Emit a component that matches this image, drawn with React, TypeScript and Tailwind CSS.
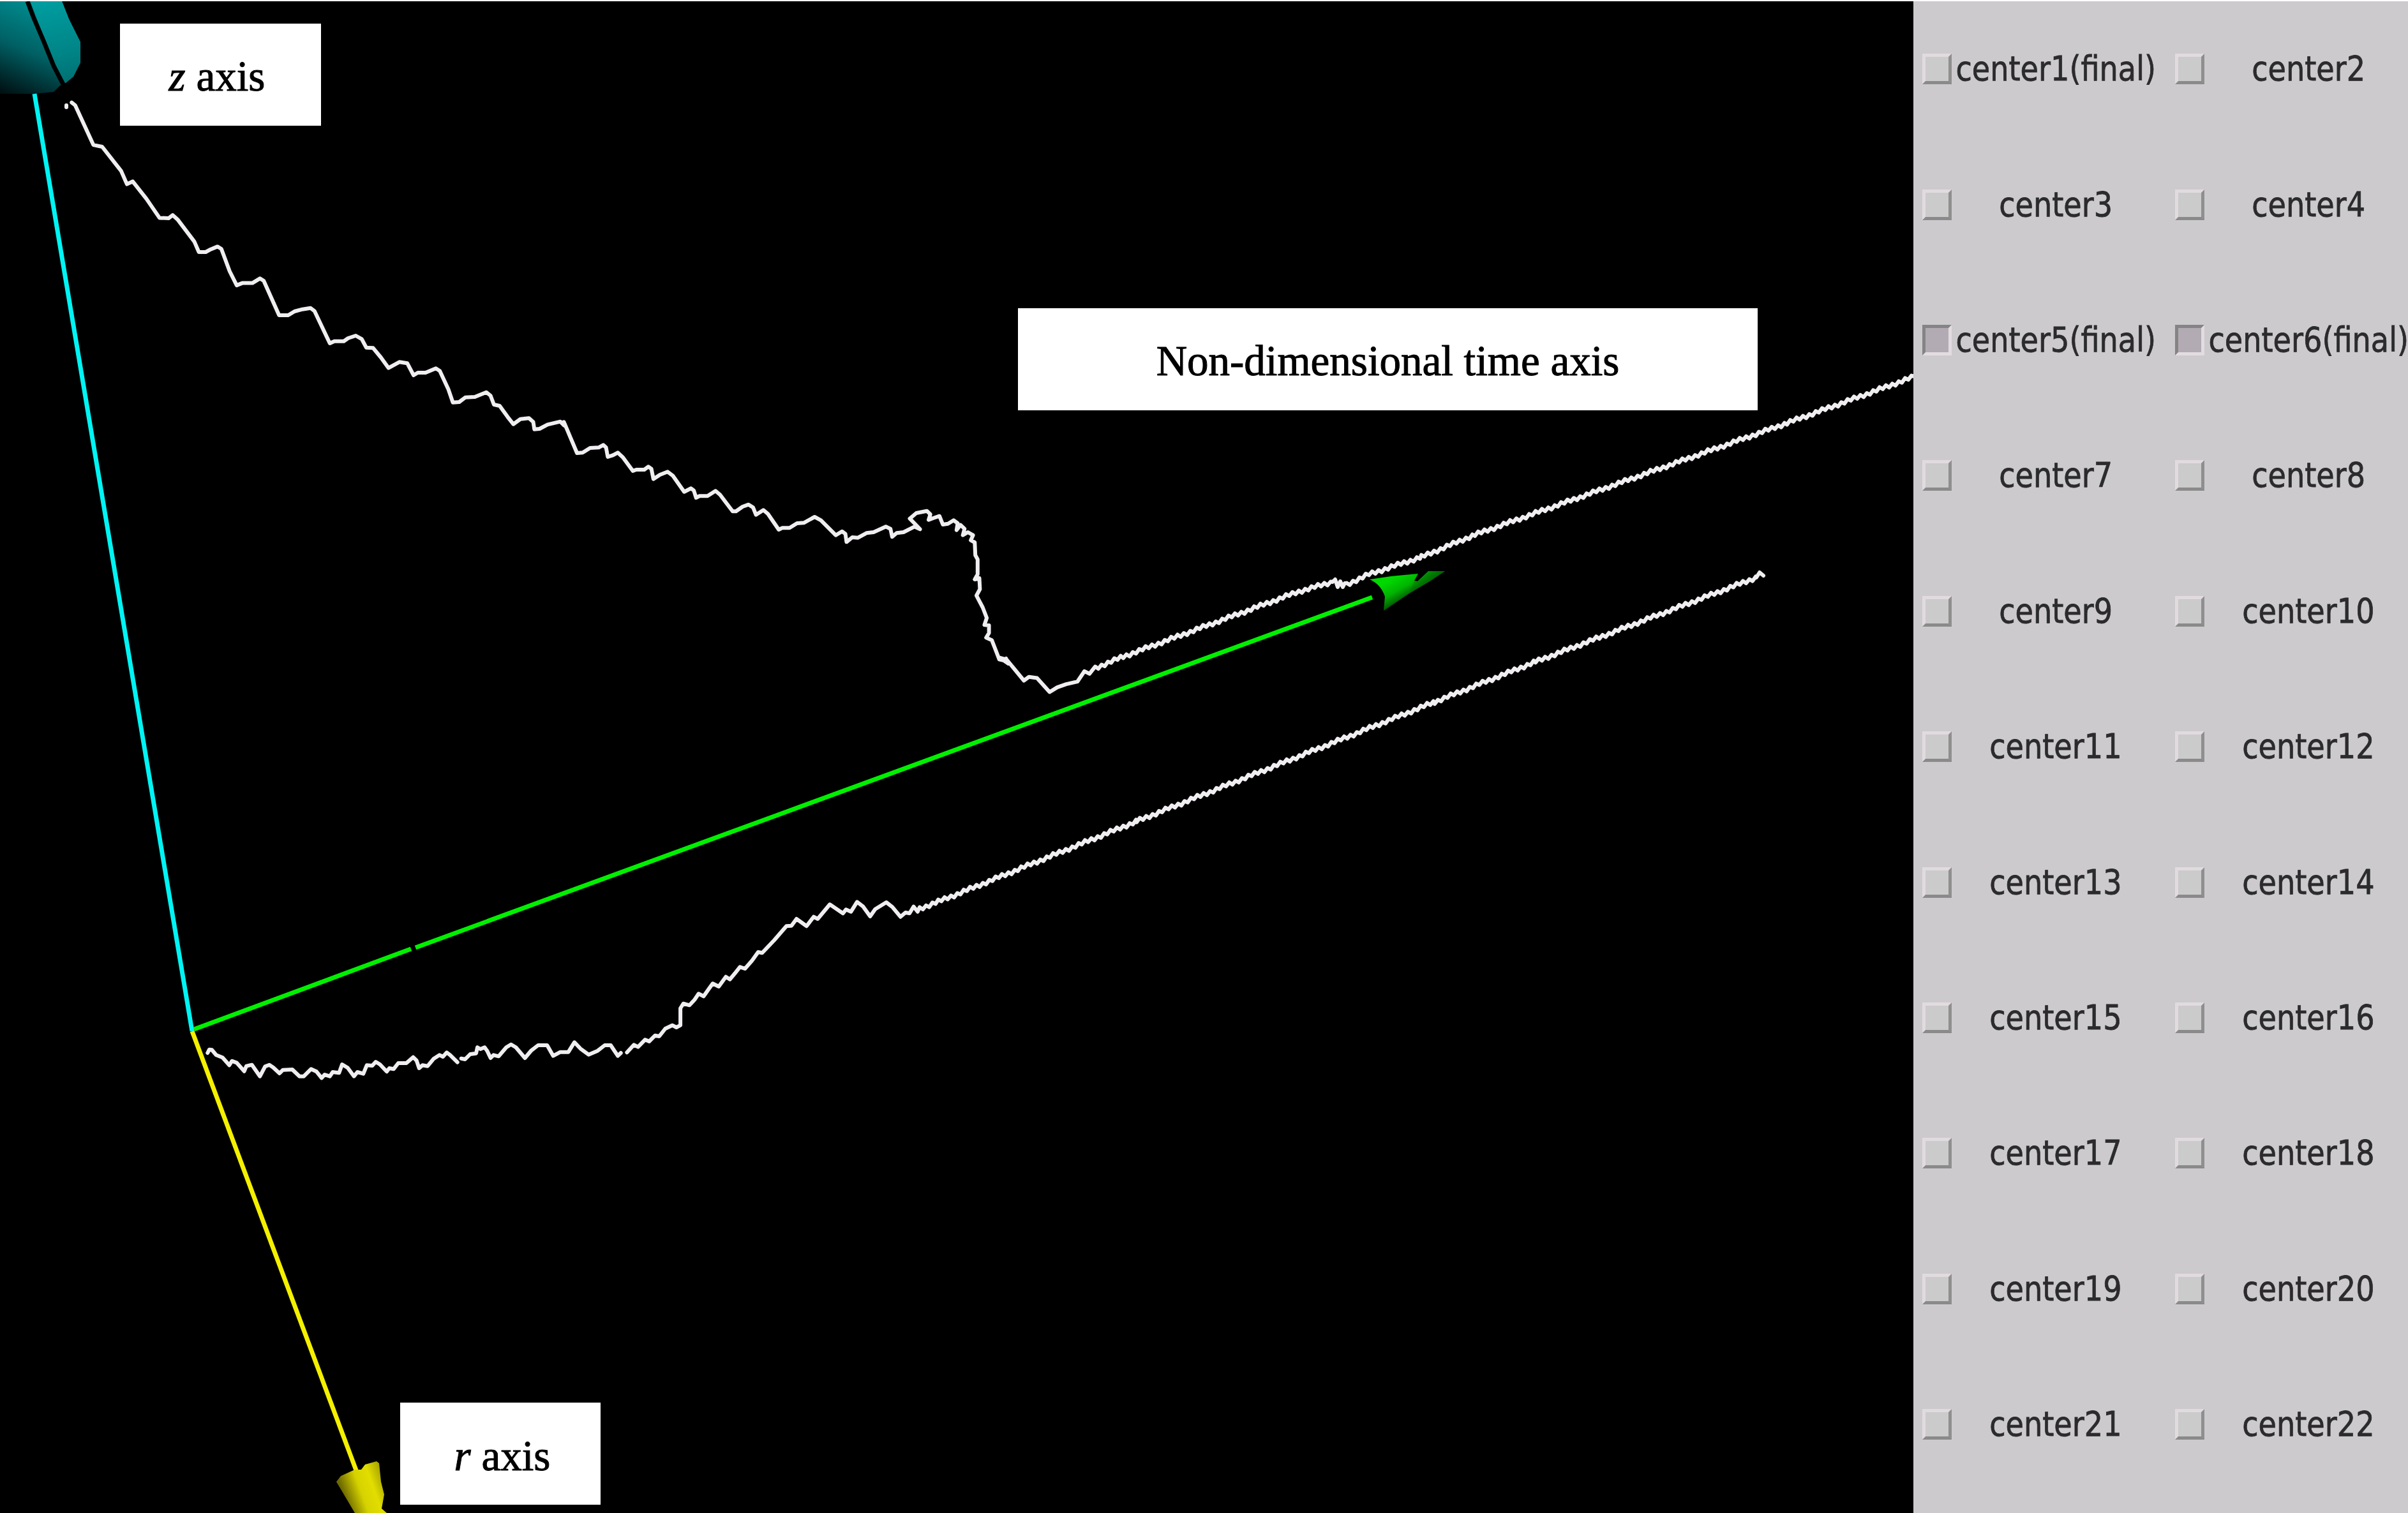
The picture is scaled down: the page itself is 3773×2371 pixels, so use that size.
import React from "react";

type Pt = [number, number];

// Digitised stretch of a curve: sampled points plus the origin and scale of their block.
function block(ox: number, oy: number, sx: number, sy: number, pts: Pt[]): Pt[] {
  return pts.map(([x, y]) => [ox + x / sx, oy + y / sy]);
}

// Fine ripple along a polyline, as left by the discrete time steps.
function ripple(nodes: Pt[], step = 5, amp = 2.4): Pt[] {
  const out: Pt[] = [];
  let n = 0;
  for (let i = 0; i < nodes.length - 1; i++) {
    const [x0, y0] = nodes[i];
    const [x1, y1] = nodes[i + 1];
    for (let x = x0; x < x1; x += step) {
      const y = y0 + ((x - x0) / (x1 - x0)) * (y1 - y0);
      out.push([x, y + (n % 2 ? amp : -amp) + Math.sin(n * 0.7)]);
      n++;
    }
  }
  out.push(nodes[nodes.length - 1]);
  return out;
}

const str = (pts: Pt[]) => pts.map(([x, y]) => `${x.toFixed(1)},${y.toFixed(1)}`).join(" ");

const upper: Pt[] = [
  ...block(0, 0, 2.529, 2.8, [
    [284, 450], [298, 462], [370, 636], [405, 644], [480, 750], [503, 808], [526, 796], [580, 872],
    [632, 956], [668, 958], [684, 944], [705, 965], [770, 1060], [788, 1106], [815, 1106], [835, 1094],
    [862, 1082], [877, 1092], [910, 1190], [938, 1252], [960, 1242], [1000, 1242], [1030, 1222],
    [1045, 1232],
  ]),
  ...block(340, 420, 2.24, 3, [
    [218, 222], [250, 222], [272, 204], [300, 194], [328, 188], [342, 202], [396, 354], [412, 344],
    [445, 344], [460, 330], [487, 318], [508, 334], [524, 374], [548, 376], [575, 420], [602, 470],
    [640, 442], [668, 448], [690, 504], [705, 492], [732, 492], [768, 472], [782, 484], [812, 570],
    [828, 632], [850, 630], [872, 608], [905, 606], [945, 584], [960, 600], [972, 642], [992, 648],
    [1020, 700], [1040, 734], [1065, 710], [1095, 706], [1110, 724], [1114, 758], [1132, 756],
    [1160, 736], [1205, 722], [1218, 740],
  ]),
  ...block(880, 640, 2.24, 3, [
    [8, 64], [54, 210], [74, 208], [100, 186], [130, 184], [146, 172], [156, 184], [162, 228],
    [180, 220], [197, 208], [215, 230], [250, 294], [262, 288], [290, 288], [304, 274], [315, 284],
    [322, 332], [345, 312], [372, 298], [390, 316], [430, 392], [454, 376], [464, 386], [472, 420],
    [484, 412], [512, 412], [540, 388], [556, 406], [600, 484], [612, 484], [635, 462], [656, 452],
    [672, 466], [682, 500], [708, 478], [724, 496], [762, 570], [774, 562], [800, 562], [826, 540],
    [850, 538], [888, 510], [910, 526], [962, 596], [984, 578], [996, 590], [1000, 628], [1020, 606],
    [1040, 608], [1070, 586], [1095, 582], [1138, 556], [1154, 566], [1160, 604], [1176, 586],
    [1200, 582], [1238, 556], [1258, 568], [1238, 540], [1222, 518], [1245, 492], [1282, 482],
    [1294, 498], [1288, 524], [1304, 516], [1326, 506], [1338, 546], [1356, 542], [1376, 526],
    [1390, 540], [1386, 572], [1400, 548], [1414, 566], [1408, 596], [1426, 582], [1444, 596],
    [1436, 620], [1450, 630], [1452, 690], [1460, 710], [1460, 780], [1450, 804], [1466, 798],
    [1468, 850], [1456, 880], [1478, 936], [1492, 985], [1484, 1018], [1500, 1020], [1500, 1056],
    [1490, 1078], [1510, 1090], [1536, 1180], [1548, 1184], [1560, 1176], [1568, 1200],
  ]),
  ...block(1560, 460, 1.2645, 2.45, [
    [8, 1398], [22, 1406], [56, 1486], [66, 1472], [82, 1476], [107, 1530], [122, 1512], [140, 1500],
    [162, 1490], [176, 1450], [186, 1460], [194, 1440],
  ]),
  ...ripple([[1716, 1047], [1760, 1029], [2035, 927], [2088, 912]]),
  [2092, 908], [2096, 920], [2100, 911], [2104, 920], [2107, 914],
  ...ripple([[2110, 916], [2145, 900], [2227, 873], [2311, 838], [2800, 663], [3000, 590]]),
];

const lowerA: Pt[] = block(300, 1600, 3, 3, [
  [76, 150], [84, 134], [96, 136], [116, 160], [146, 172], [178, 208], [190, 188], [212, 196],
  [248, 236], [258, 212], [284, 206], [322, 260], [346, 214], [366, 206], [384, 218], [414, 246],
  [430, 230], [474, 228], [508, 260], [528, 260], [562, 226], [588, 238], [612, 268], [626, 252],
  [650, 260], [664, 240], [694, 244], [708, 204], [734, 220], [764, 260], [780, 240], [808, 248],
  [824, 208], [850, 210], [866, 192], [886, 204], [918, 238], [930, 222], [950, 226], [972, 198],
  [1010, 198], [1042, 170], [1058, 186], [1070, 222], [1086, 208], [1110, 212], [1138, 178],
  [1166, 160], [1182, 168], [1200, 148], [1216, 160], [1250, 194],
]);

const lowerB: Pt[] = [
  ...block(300, 1600, 3, 3, [
    [1268, 176], [1286, 180], [1310, 156], [1338, 152], [1344, 124], [1358, 132], [1378, 124],
    [1390, 140], [1406, 174], [1420, 160], [1444, 166], [1480, 124], [1502, 110], [1525, 124],
  ]),
  ...block(280, 1380, 1.2645, 3, [
    [686, 834], [698, 800], [712, 774], [730, 774], [742, 824], [756, 806], [772, 806], [784, 760],
    [796, 790], [812, 818], [830, 800], [844, 774], [856, 774], [870, 824], [876, 810],
  ]),
];

const lowerC: Pt[] = [
  ...block(280, 1380, 1.2645, 3, [
    [888, 808], [902, 772], [910, 782], [924, 748], [932, 756], [944, 728], [952, 732], [964, 696],
    [978, 680], [986, 690], [994, 680], [994, 600], [1000, 578], [1012, 586], [1022, 560], [1030, 532],
    [1040, 544], [1050, 510], [1058, 484], [1070, 498], [1084, 452], [1092, 464], [1102, 436],
    [1112, 406], [1122, 414], [1136, 376], [1148, 336], [1156, 340], [1180, 280], [1204, 214],
    [1214, 212], [1224, 180], [1244, 214], [1258, 170], [1266, 180], [1290, 112], [1304, 134],
    [1316, 154], [1322, 136], [1332, 146], [1344, 100], [1356, 122], [1370, 168], [1380, 134],
    [1402, 102], [1414, 124], [1430, 170], [1440, 150], [1448, 154], [1456, 122], [1464, 146],
  ]),
  ...ripple([[1441, 1424], [1470, 1413], [1520, 1393], [1781, 1287], [2248, 1100], [2406, 1037], [2752, 905]]),
  [2757, 897], [2763, 902],
];

interface Item {
  label: string;
  on?: boolean;
}

const items: Item[] = Array.from({ length: 22 }, (_, i) => {
  const n = i + 1;
  const final = n === 1 || n === 5 || n === 6;
  return { label: `center${n}${final ? "(final)" : ""}`, on: n === 5 || n === 6 };
});

function Toggle({ label, on }: Item) {
  return (
    <label className="flex h-[212.4px] w-[396px] items-center">
      <span
        className={
          on
            ? "h-[48px] w-[46px] shrink-0 border-[5px] border-t-[#858485] border-l-[#858485] border-r-[#e2dce1] border-b-[#e2dce1] bg-[#b3abb3]"
            : "h-[48px] w-[46px] shrink-0 border-[5px] border-t-[#e1dbe0] border-l-[#e1dbe0] border-r-[#8f8f8f] border-b-[#8a8a8a] bg-[#cbcbcb]"
        }
      />
      <span className="flex w-[326px] shrink-0 justify-center">
        <span className="origin-center scale-x-[0.88] font-['DejaVu_Sans',sans-serif] text-[52.5px] leading-[60px] whitespace-nowrap text-[#2b2b2d] [-webkit-text-stroke:0.8px_#2b2b2d]">
          {label}
        </span>
      </span>
    </label>
  );
}

function Caption({ className, children }: { className: string; children: React.ReactNode }) {
  return (
    <div
      className={`absolute flex items-center justify-center bg-white font-['Liberation_Serif',serif] text-[67px] leading-none whitespace-pre text-black [-webkit-text-stroke:1px_black] ${className}`}
    >
      {children}
    </div>
  );
}

function Scene() {
  return (
    <svg className="block h-full w-full" viewBox="0 0 2998 2369">
      <defs>
        <linearGradient id="cyanL" gradientUnits="userSpaceOnUse" x1="75" y1="10" x2="15" y2="150">
          <stop offset="0" stopColor="#008f92" />
          <stop offset="0.5" stopColor="#006064" />
          <stop offset="1" stopColor="#001012" />
        </linearGradient>
        <linearGradient id="cyanR" gradientUnits="userSpaceOnUse" x1="80" y1="0" x2="112" y2="140">
          <stop offset="0" stopColor="#009da0" />
          <stop offset="0.6" stopColor="#008486" />
          <stop offset="1" stopColor="#006b6e" />
        </linearGradient>
        <linearGradient id="green" gradientUnits="userSpaceOnUse" x1="2185" y1="905" x2="2206" y2="943">
          <stop offset="0" stopColor="#00d800" />
          <stop offset="0.45" stopColor="#00b400" />
          <stop offset="1" stopColor="#003c00" />
        </linearGradient>
        <linearGradient id="tip" gradientUnits="userSpaceOnUse" x1="2190" y1="0" x2="2264" y2="0">
          <stop offset="0" stopColor="#005000" stopOpacity="0" />
          <stop offset="1" stopColor="#006000" stopOpacity="0.7" />
        </linearGradient>
        <linearGradient id="yellow" gradientUnits="userSpaceOnUse" x1="536" y1="2335" x2="600" y2="2312">
          <stop offset="0" stopColor="#6e6a00" />
          <stop offset="0.4" stopColor="#d6d200" />
          <stop offset="0.7" stopColor="#e2de00" />
          <stop offset="1" stopColor="#a8a400" />
        </linearGradient>
      </defs>
      <g transform="translate(0 -2)">
        <polygon points="0,2 97,2 108,30 126,66 126,98 115,120 103,130 94,134 84,144 54,147 0,147" fill="url(#cyanL)" />
        <polygon points="48,2 97,2 108,30 126,66 126,98 115,120 103,130 94,127" fill="url(#cyanR)" />
        <path d="M43 2 L52 26 L69 66 L84 103 L102 138" stroke="#000" strokeWidth="7" fill="none" />
        <g fill="none" strokeWidth="7">
          <path d="M54 147 L301 1616" stroke="#00f4f4" />
          <path d="M304 1613 L644 1487 M651 1485 L2150 936" stroke="#00f000" />
          <path d="M301 1616 L558 2304" stroke="#f4f000" />
        </g>
        <path
          d="M2146 908 L2180 903 L2222 899 L2216 910 L2221 911 L2238 895 L2264 895 L2240 911 L2208 930 L2168 957 L2170 935 Q2164 916 2146 908Z"
          fill="url(#green)"
        />
        <path d="M2216 910 L2221 911 L2238 895 L2264 895 L2240 911 L2208 930Z" fill="url(#tip)" />
        <path
          d="M527 2322 L534 2313 L556 2303 L566 2303 L572 2295 L590 2290 L594 2293 L597 2322 L602 2342 L598 2364 L606 2371 L556 2371Z"
          fill="url(#yellow)"
        />
        <g fill="none" stroke="#f0eef0" strokeWidth="6" strokeLinejoin="round" strokeLinecap="round">
          <path d="M104 165 v3" />
          <polyline points={str(upper)} />
          <polyline points={str(lowerA)} />
          <polyline points={str(lowerB)} />
          <polyline points={str(lowerC)} />
        </g>
      </g>
    </svg>
  );
}

export default function App() {
  return (
    <div className="flex h-[2371px] w-[3773px] overflow-hidden border-t-2 border-white bg-black">
      <main className="relative h-full w-[2998px] shrink-0 overflow-hidden bg-black">
        <Scene />
        <Caption className="top-[35px] left-[188px] h-[160px] w-[315px] pt-[4px] pr-[11px]">
          <i>z</i> axis
        </Caption>
        <Caption className="top-[481px] left-[1595px] h-[160px] w-[1159px] pt-[4px]">Non-dimensional time axis</Caption>
        <Caption className="top-[2196px] left-[627px] h-[160px] w-[314px] pt-[7px] pl-[6px]">
          <i>r</i> axis
        </Caption>
      </main>
      <aside className="grid w-[775px] shrink-0 grid-cols-[396px_396px] content-start overflow-hidden bg-[#cccacd] pl-[14px]">
        {items.map((it) => (
          <Toggle key={it.label} {...it} />
        ))}
      </aside>
    </div>
  );
}
